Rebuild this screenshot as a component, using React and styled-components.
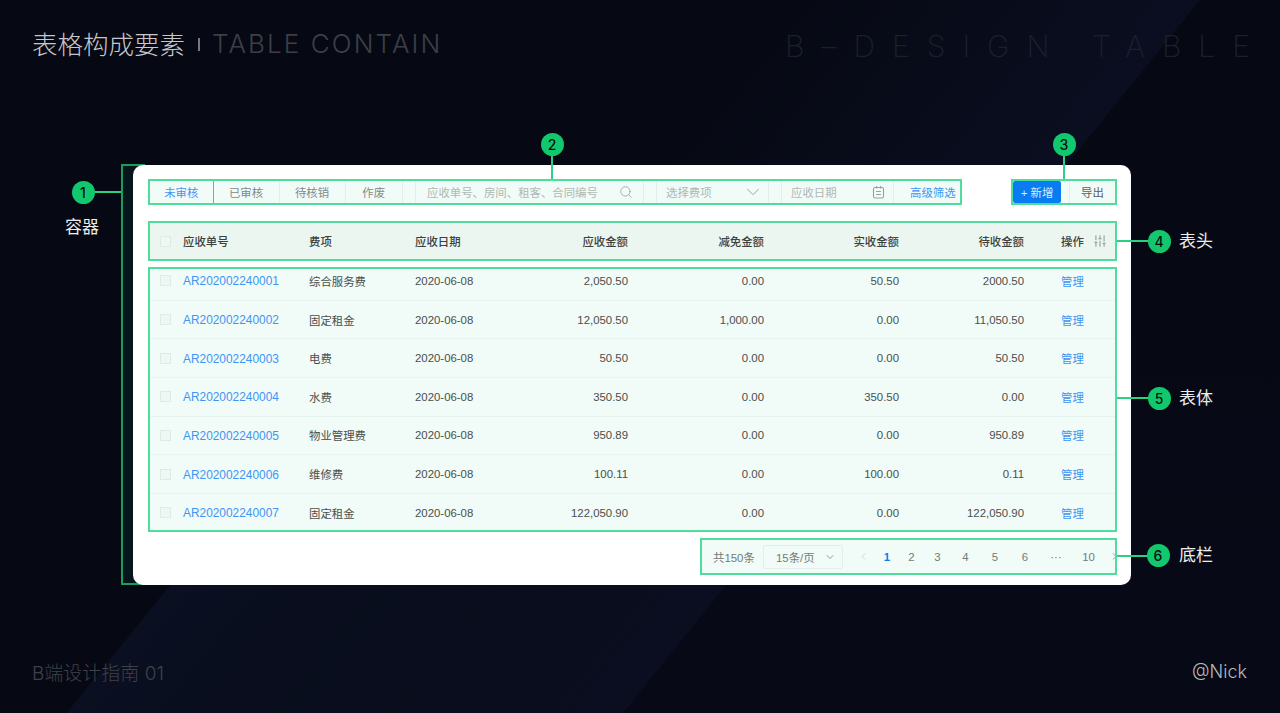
import React from 'react'
import styled, { createGlobalStyle } from 'styled-components'
import { Search, ChevronDown, ChevronLeft, ChevronRight, SlidersVertical } from 'lucide-react'

const green = '#4fdd9c'
const fontStack = '"Liberation Sans", "Noto Sans CJK SC", sans-serif'
const displayFont = 'Inter, "Noto Sans CJK SC", sans-serif'

const GlobalStyle = createGlobalStyle`
  html, body { margin: 0; padding: 0; background: #060913; }
  * { box-sizing: border-box; }
  body { font-family: ${fontStack}; }
`

const rows = [
  ['AR202002240001', '综合服务费', '2,050.50', '0.00', '50.50', '2000.50'],
  ['AR202002240002', '固定租金', '12,050.50', '1,000.00', '0.00', '11,050.50'],
  ['AR202002240003', '电费', '50.50', '0.00', '0.00', '50.50'],
  ['AR202002240004', '水费', '350.50', '0.00', '350.50', '0.00'],
  ['AR202002240005', '物业管理费', '950.89', '0.00', '0.00', '950.89'],
  ['AR202002240006', '维修费', '100.11', '0.00', '100.00', '0.11'],
  ['AR202002240007', '固定租金', '122,050.90', '0.00', '0.00', '122,050.90'],
]

const pages = ['1', '2', '3', '4', '5', '6', '···', '10']

const DateIcon = () => (
  <svg width="13" height="14" viewBox="0 0 13 14" fill="none" stroke="currentColor" strokeWidth="1.1">
    <rect x="1.5" y="2.5" width="10" height="10.5" rx="1.5" />
    <path d="M4.5 1v2.5M8.5 1v2.5M4 6.5h5M4 9.5h5" />
  </svg>
)

const App = () => {
  return (
    <Slide>
      <GlobalStyle />
      <Bracket />

      <TopBar>
        <TitleWrap>
          <Title>表格构成要素</Title>
          <TitleBar />
          <TitleEn>TABLE CONTAIN</TitleEn>
        </TitleWrap>
        <Watermark>B–DESIGN TABLE</Watermark>
      </TopBar>

      <Card>
        <Toolbar>
          <FilterGroup>
            <Tab $active $w={63.5}>未审核</Tab>
            <Tab>已审核</Tab>
            <Tab>待核销</Tab>
            <Tab $w={57.5}>作废</Tab>
            <Spacer />
            <Field $w={229} $pl={11} $pr={10}>
              应收单号、房间、租客、合同编号
              <Search size={14} strokeWidth={1.4} />
            </Field>
            <Spacer />
            <Field $w={113} $pl={9} $pr={4}>
              选择费项
              <ChevronDown size={22} strokeWidth={1} />
            </Field>
            <Spacer />
            <Field $w={113} $pl={9} $pr={8}>
              应收日期
              <DateIcon />
            </Field>
            <AdvancedLink>高级筛选</AdvancedLink>
          </FilterGroup>
          <ActionGroup>
            <PrimaryButton>+ 新增</PrimaryButton>
            <GhostButton>导出</GhostButton>
          </ActionGroup>
        </Toolbar>

        <TableHead>
          <CheckCell><Check /></CheckCell>
          <div>应收单号</div>
          <div>费项</div>
          <div>应收日期</div>
          <Amount>应收金额</Amount>
          <Amount>减免金额</Amount>
          <Amount>实收金额</Amount>
          <Amount>待收金额</Amount>
          <OpHead>
            操作
            <SlidersVertical size={14} strokeWidth={1.8} color="#8d9a96" />
          </OpHead>
        </TableHead>

        <TableBody>
          {rows.map((r) => (
            <Row key={r[0]}>
              <CheckCell><Check /></CheckCell>
              <Code>{r[0]}</Code>
              <div>{r[1]}</div>
              <div>2020-06-08</div>
              <Amount>{r[2]}</Amount>
              <Amount>{r[3]}</Amount>
              <Amount>{r[4]}</Amount>
              <Amount>{r[5]}</Amount>
              <OpLink>管理</OpLink>
            </Row>
          ))}
        </TableBody>

        <Pager>
          <Total>共150条</Total>
          <PageSize>
            15条/页
            <ChevronDown size={12} strokeWidth={1.5} />
          </PageSize>
          <PageList>
            <PageItem $muted><ChevronLeft size={11} strokeWidth={1.5} /></PageItem>
            {pages.map((p) => (
              <PageItem key={p} $current={p === '1'}>{p}</PageItem>
            ))}
            <PageItem><ChevronRight size={11} strokeWidth={1.5} /></PageItem>
          </PageList>
        </Pager>
      </Card>

      <BottomBar>
        <Guide>B端设计指南 01</Guide>
        <Author>@Nick</Author>
      </BottomBar>

      <HLine $x={94} $y={191} $w={27} />
      <Badge $x={83} $y={192}>1</Badge>
      <Label $x={65} $y={217}>容器</Label>

      <VLine $x={551} $y={154} $h={25} />
      <Badge $x={552} $y={144}>2</Badge>

      <VLine $x={1063} $y={154} $h={25} />
      <Badge $x={1064} $y={144}>3</Badge>

      <HLine $x={1117} $y={240} $w={32} />
      <Badge $x={1159} $y={241}>4</Badge>
      <Label $x={1179} $y={231}>表头</Label>

      <HLine $x={1117} $y={397} $w={32} />
      <Badge $x={1159} $y={398}>5</Badge>
      <Label $x={1179} $y={388}>表体</Label>

      <HLine $x={1117} $y={555} $w={32} />
      <Badge $x={1158} $y={555}>6</Badge>
      <Label $x={1179} $y={545}>底栏</Label>
    </Slide>
  )
}

const Slide = styled.div`
  position: relative;
  display: flex;
  flex-direction: column;
  width: 1280px;
  height: 713px;
  overflow: hidden;
  background:
    linear-gradient(129deg, transparent 600px, #0a0e20 932px, transparent 933px),
    linear-gradient(180deg, #060913 30%, transparent 75%),
    linear-gradient(129deg, transparent 500px, #0a0f21 501px, #070a16 930px),
    #060913;
`

const TopBar = styled.header`
  display: flex;
  justify-content: space-between;
  align-items: center;
  height: 88px;
  padding: 0 27px 0 32px;
  font-family: ${displayFont};
`

const TitleWrap = styled.div`
  display: flex;
  align-items: center;
`

const Title = styled.h1`
  margin: -4px 0 0;
  font-size: 25.5px;
  font-weight: 300;
  color: #c6c7cb;
`

const TitleBar = styled.span`
  width: 2px;
  height: 13px;
  margin: 0 12px 0 13px;
  background: #77797f;
`

const TitleEn = styled.span`
  margin-top: -2px;
  font-size: 26px;
  font-weight: 300;
  letter-spacing: 2.1px;
  color: #3c3f47;
`

const Watermark = styled.span`
  position: relative;
  top: 2px;
  font-size: 30px;
  font-weight: 200;
  letter-spacing: 17.05px;
  margin-right: -14px;
  color: #1d202b;
`

const Card = styled.main`
  position: relative;
  z-index: 1;
  display: flex;
  flex-direction: column;
  width: 998px;
  height: 420px;
  margin: 77px 0 0 133px;
  padding: 14px 14px 0 15px;
  background: #fff;
  border-radius: 10px;
  font-size: 11.4px;
  color: #4a4f4d;
`

const Toolbar = styled.div`
  display: flex;
  justify-content: space-between;
  height: 26px;
  margin-bottom: 16px;
`

const FilterGroup = styled.div`
  display: flex;
  align-items: stretch;
  width: 814px;
  border: 2px solid ${green};
  background: #f1fbf7;
`

const Tab = styled.div`
  display: flex;
  align-items: center;
  justify-content: center;
  width: ${(p) => p.$w || 66}px;
  color: ${(p) => (p.$active ? '#4a90f7' : '#838a87')};
  border-right: 1px solid ${(p) => (p.$active ? '#6ea3fa' : '#e2efe9')};
`

const Spacer = styled.div`
  width: 12px;
  flex: none;
`

const Field = styled.div`
  display: flex;
  align-items: center;
  justify-content: space-between;
  width: ${(p) => p.$w}px;
  padding: 0 ${(p) => p.$pr}px 0 ${(p) => p.$pl}px;
  color: #b0b8b4;
  border-left: 1px solid #e2efe9;
  border-right: 1px solid #e2efe9;
  svg { color: #97a09c; }
`

const AdvancedLink = styled.div`
  display: flex;
  align-items: center;
  padding-left: 16px;
  color: #3f95f5;
`

const ActionGroup = styled.div`
  display: flex;
  width: 106px;
  border: 2px solid ${green};
  background: #f1fbf7;
`

const PrimaryButton = styled.div`
  display: flex;
  align-items: center;
  justify-content: center;
  width: 48px;
  background: #0a7cf2;
  color: #dcecff;
  border-radius: 2px;
`

const GhostButton = styled.div`
  display: flex;
  align-items: center;
  justify-content: center;
  margin-left: 8px;
  flex: 1;
  color: #5a605d;
  border-left: 1px solid #e2efe9;
`

const gridColumns = '33px 126px 106px 100px 113px 136px 135px 125px 1fr'

const TableHead = styled.div`
  display: grid;
  grid-template-columns: ${gridColumns};
  align-items: center;
  height: 40px;
  margin-bottom: 6px;
  border: 2px solid ${green};
  background: #ecf6f1;
  color: #3d4240;
  font-weight: 500;
`

const TableBody = styled.div`
  height: 265px;
  margin-bottom: 6px;
  border: 2px solid ${green};
  background: #f1fbf7;
`

const Row = styled.div`
  display: grid;
  grid-template-columns: ${gridColumns};
  align-items: center;
  height: 38.67px;
  border-bottom: 1px solid #e6f4ee;

  &:first-child {
    height: 31.7px;
    padding-bottom: 7px;
  }

  &:last-child {
    height: 35.7px;
    padding-top: 2px;
    border-bottom: 0;
  }
`

const CheckCell = styled.div`
  padding-left: 10px;
  line-height: 0;
`

const Check = styled.span`
  display: inline-block;
  width: 11px;
  height: 11px;
  border: 1px solid #dfeae5;
  background: #eef7f3;
`

const Code = styled.div`
  padding-top: 1px;
  font-size: 11.9px;
  color: #3f95f5;
`

const Amount = styled.div`
  text-align: right;
`

const OpHead = styled.div`
  display: flex;
  align-items: center;
  justify-content: space-between;
  padding: 0 8px 0 37px;
`

const OpLink = styled.div`
  padding-left: 37px;
  color: #3f95f5;
`

const Pager = styled.div`
  display: flex;
  align-items: center;
  align-self: flex-end;
  width: 417px;
  height: 37px;
  padding-left: 11px;
  border: 2px solid ${green};
  background: #f1fbf7;
  overflow: hidden;
  color: #747b78;
`

const Total = styled.span`
  width: 50px;
  flex: none;
`

const PageSize = styled.div`
  display: flex;
  align-items: center;
  justify-content: space-between;
  width: 80px;
  height: 24px;
  flex: none;
  padding: 0 6px 0 12px;
  border: 1px solid #e4efea;
  border-radius: 2px;
`

const PageList = styled.div`
  display: grid;
  grid-template-columns: 24px 24px 25px 27px 29px 30px 30px 32px 33px 19px;
  margin-left: 8px;
  flex: none;
`

const PageItem = styled.div`
  display: flex;
  align-items: center;
  justify-content: center;
  color: ${(p) => (p.$current ? '#0a7cf2' : p.$muted ? '#b8c6d0' : '#747b78')};
  font-weight: ${(p) => (p.$current ? 700 : 400)};
`

const BottomBar = styled.footer`
  display: flex;
  justify-content: space-between;
  align-items: center;
  margin-top: 73px;
  padding: 0 33px 0 32px;
  font-family: ${displayFont};
  font-weight: 300;
`

const Guide = styled.span`
  font-size: 19px;
  color: #3e4149;
`

const Author = styled.span`
  font-size: 18px;
  color: #b8b9bd;
`

const Badge = styled.div`
  position: absolute;
  z-index: 2;
  left: ${(p) => p.$x - 11.5}px;
  top: ${(p) => p.$y - 11.5}px;
  display: flex;
  align-items: center;
  justify-content: center;
  width: 23px;
  height: 23px;
  border-radius: 50%;
  background: #12c86e;
  color: #07120c;
  font-family: ${displayFont};
  font-size: 14px;
  font-weight: 500;
`

const Label = styled.div`
  position: absolute;
  left: ${(p) => p.$x}px;
  top: ${(p) => p.$y}px;
  font-size: 17px;
  line-height: 22px;
  color: #eceded;
`

const HLine = styled.div`
  position: absolute;
  z-index: 2;
  left: ${(p) => p.$x}px;
  top: ${(p) => p.$y}px;
  width: ${(p) => p.$w}px;
  height: 2px;
  background: #2bd083;
`

const VLine = styled.div`
  position: absolute;
  z-index: 2;
  left: ${(p) => p.$x}px;
  top: ${(p) => p.$y}px;
  width: 2px;
  height: ${(p) => p.$h}px;
  background: #2bd083;
`

const Bracket = styled.div`
  position: absolute;
  left: 121px;
  top: 164px;
  width: 24px;
  height: 421px;
  border: 2px solid #1a9c5c;
  border-right: 0;
  background: #07161c;
`

export default App
